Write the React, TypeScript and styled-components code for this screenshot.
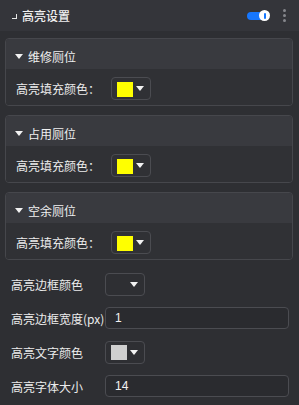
import React from "react";
import styled, { createGlobalStyle } from "styled-components";

const Global = createGlobalStyle`
  html, body { margin: 0; padding: 0; background: #2e2f33; }
  body { font-family: "Noto Sans CJK SC", "Noto Sans", "Liberation Sans", sans-serif; font-size: 12px; color: #e6e6e6; }
`;

const Page = styled.div`
  width: 299px;
  height: 405px;
  background: #2e2f33;
  overflow: hidden;
`;

const Header = styled.div`
  height: 31px;
  background: #34353a;
  display: flex;
  align-items: center;
  padding: 0 13px 0 12px;
  box-sizing: border-box;
`;

const Corner = styled.span`
  width: 4px;
  height: 4px;
  border-right: 1.5px solid #e6e6e6;
  border-bottom: 1.5px solid #e6e6e6;
  margin-top: 2px;
  margin-right: 5px;
`;

const Title = styled.div`
  flex: 1;
  font-size: 12px;
  font-weight: 500;
  color: #f0f0f0;
  line-height: 1;
`;

const Toggle = styled.div`
  position: relative;
  width: 23px;
  height: 11px;
  margin-right: 13px;
`;

const Track = styled.div`
  position: absolute;
  left: 0;
  top: 1.5px;
  width: 20px;
  height: 8px;
  border-radius: 4px;
  background: #1677ff;
`;

const Knob = styled.div`
  position: absolute;
  right: 0;
  top: 0;
  width: 11px;
  height: 11px;
  border-radius: 50%;
  background: #ffffff;
  display: flex;
  align-items: center;
  justify-content: center;
  &::after {
    content: "";
    width: 2px;
    height: 6px;
    background: #1677ff;
    border-radius: 1px;
  }
`;

const Kebab = styled.div`
  display: flex;
  flex-direction: column;
  gap: 2px;
  span {
    width: 3px;
    height: 3px;
    border-radius: 50%;
    background: #86878c;
  }
`;

const Content = styled.div`
  padding-top: 7px;
`;

const Panel = styled.div`
  margin: 0 6px 9px 5px;
  border: 1px solid #46474c;
  border-radius: 4px;
  overflow: hidden;
`;

const PanelHead = styled.div`
  height: 30px;
  background: #393a3f;
  display: flex;
  align-items: center;
  padding: 4px 0 0 9px;
  box-sizing: border-box;
  font-size: 12px;
  color: #f0f0f0;
`;

const Caret = styled.span<{ $mr?: number }>`
  width: 0;
  height: 0;
  border-left: 4px solid transparent;
  border-right: 4px solid transparent;
  border-top: 5px solid #f2f2f2;
  margin-right: ${(p) => p.$mr ?? 0}px;
`;

const PanelBody = styled.div`
  height: 36px;
  background: #303135;
  display: flex;
  align-items: center;
  padding: 3px 0 0 10px;
  box-sizing: border-box;
`;

const Label = styled.div<{ $w: number }>`
  width: ${(p) => p.$w}px;
  flex-shrink: 0;
  white-space: nowrap;
  font-size: 12px;
  color: #ececec;
`;

const ColorButton = styled.div`
  width: 40px;
  height: 23px;
  border: 1px solid #4b4c51;
  border-radius: 4px;
  box-sizing: border-box;
  display: flex;
  align-items: center;
  padding-left: 5px;
  gap: 3px;
`;

const Swatch = styled.span<{ $c: string }>`
  width: 16px;
  height: 15px;
  background: ${(p) => p.$c};
  margin-top: 1px;
`;

const Rows = styled.div`
  padding: 0 10px 0 11px;
  margin-top: -2px;
`;

const Row = styled.div`
  height: 34px;
  display: flex;
  align-items: center;
`;

const Input = styled.div`
  width: 184px;
  height: 22px;
  border: 1px solid #4b4c51;
  border-radius: 4px;
  background: #2a2b2f;
  box-sizing: border-box;
  display: flex;
  align-items: center;
  padding-left: 9px;
  font-family: "Liberation Sans", "Noto Sans", sans-serif;
  font-size: 12px;
  color: #f2f2f2;
`;

const sections = ["维修厕位", "占用厕位", "空余厕位"];

export default function App() {
  return (
    <Page>
      <Global />
      <Header>
        <Corner />
        <Title>高亮设置</Title>
        <Toggle>
          <Track />
          <Knob />
        </Toggle>
        <Kebab>
          <span />
          <span />
          <span />
        </Kebab>
      </Header>
      <Content>
        {sections.map((s) => (
          <Panel key={s}>
            <PanelHead>
              <Caret $mr={5} />
              {s}
            </PanelHead>
            <PanelBody>
              <Label $w={95}>高亮填充颜色：</Label>
              <ColorButton>
                <Swatch $c="#ffff00" />
                <Caret />
              </ColorButton>
            </PanelBody>
          </Panel>
        ))}
        <Rows>
          <Row>
            <Label $w={94}>高亮边框颜色</Label>
            <ColorButton>
              <Swatch $c="transparent" />
              <Caret />
            </ColorButton>
          </Row>
          <Row>
            <Label $w={94}>高亮边框宽度(px)</Label>
            <Input>1</Input>
          </Row>
          <Row>
            <Label $w={94}>高亮文字颜色</Label>
            <ColorButton>
              <Swatch $c="#cfcfcf" />
              <Caret />
            </ColorButton>
          </Row>
          <Row>
            <Label $w={94}>高亮字体大小</Label>
            <Input>14</Input>
          </Row>
        </Rows>
      </Content>
    </Page>
  );
}
